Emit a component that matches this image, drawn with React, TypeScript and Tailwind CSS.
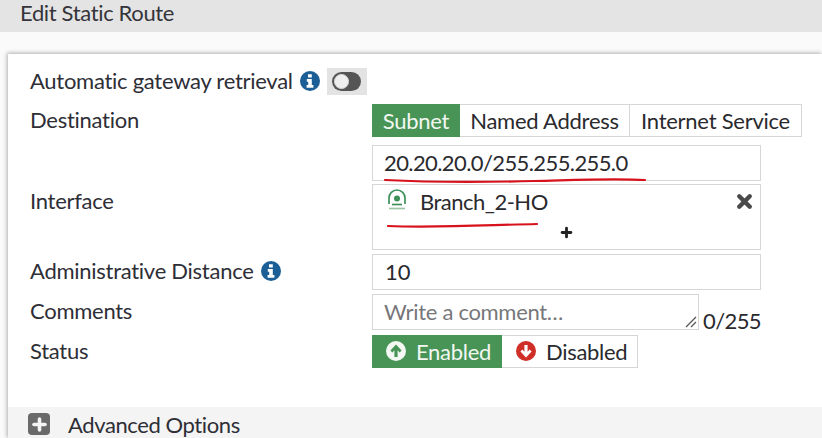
import React from 'react';
import { Plus, X } from 'lucide-react';

const LABEL = 'w-[342px] shrink-0 -translate-y-[1px] text-[22px] leading-[26px] text-[#2e2e36] tracking-[-0.27px]';
const FIELD = 'border border-[#d6d6d6] bg-white text-[22px] text-[#2a2a2e]';

const InfoIcon = () => (
  <svg width="20" height="20" viewBox="0 0 20 20" className="shrink-0">
    <circle cx="10" cy="10" r="10" fill="#1c5f96" />
    <path d="M8 3.2h3.8v3.2H8zM6.8 8h5v6h1.6v2.8H6.6V14h1.6v-3.2H6.8z" fill="#fff" />
  </svg>
);

const Toggle = () => (
  <span className="ml-[7px] flex h-[27px] w-[40px] items-center justify-center bg-[#e3e3e3]">
    <span className="flex h-[19px] w-[29px] items-center rounded-full bg-[#555]">
      <span className="ml-[2px] h-[15px] w-[15px] rounded-full border border-[#ddd] bg-[#eee]" />
    </span>
  </span>
);

const Tab = ({ label, active, className }: { label: string; active?: boolean; className: string }) => (
  <span
    className={`flex h-full items-center justify-center pb-[1px] text-[22px] tracking-[-0.25px] ${className} ${
      active ? 'bg-[#479456] text-[#f2f7f2]' : 'border-y border-r border-[#d6d6d6] text-[#2a2a2e]'
    }`}
  >
    {label}
  </span>
);

const TunnelIcon = () => (
  <svg width="22" height="24" viewBox="0 0 22 24" fill="none" className="shrink-0">
    <path d="M3 16V10a8 8 0 0 1 16 0v6" stroke="#3f9058" strokeWidth="1.7" />
    <circle cx="11" cy="10.5" r="3" fill="#3f9058" />
    <path d="M6 16.5h10" stroke="#3f9058" strokeWidth="1.7" />
    <path d="M3 20.5h16" stroke="#9cc4a5" strokeWidth="1.7" />
  </svg>
);

const UpIcon = () => (
  <svg width="20" height="20" viewBox="0 0 20 20" className="shrink-0">
    <circle cx="10" cy="10" r="10" fill="#f4f8f4" />
    <path d="M10 3.6 15.6 9.6 13.6 11.4 11.6 9.3V16H8.4V9.3L6.4 11.4 4.4 9.6z" fill="#479456" />
  </svg>
);

const DownIcon = () => (
  <svg width="20" height="20" viewBox="0 0 20 20" className="shrink-0">
    <circle cx="10" cy="10" r="10" fill="#cf2f27" />
    <path d="M10 16.4 4.4 10.4 6.4 8.6 8.4 10.7V4h3.2v6.7l2-2.1 2 1.8z" fill="#fff" />
  </svg>
);

// red pen marks drawn over the screenshot
const Scribble = ({ d, className }: { d: string; className: string }) => (
  <svg className={`pointer-events-none absolute ${className}`} width="270" height="10" viewBox="0 0 270 10" fill="none">
    <path d={d} stroke="#d8121c" strokeWidth="2.2" strokeLinecap="round" />
  </svg>
);

export default function App() {
  return (
    <div
      className="flex h-[438px] w-[822px] flex-col overflow-hidden bg-[#fafafa]"
      style={{ fontFamily: 'Lato, "Open Sans", sans-serif' }}
    >
      <div className="flex h-[32px] shrink-0 items-center bg-[#e4e4e4] pb-[8px] pl-[20px] text-[22px] tracking-[-0.35px] text-[#34343a]">
        Edit Static Route
      </div>

      <div className="ml-[8px] mt-[22px] flex flex-1 flex-col bg-white shadow-[-1px_-1px_4px_rgba(0,0,0,0.3)]">
        <div className="mt-[14px] flex h-[27px] items-center pl-[22px]">
          <span className="-translate-y-[1px] text-[22px] tracking-[-0.27px] text-[#2e2e36]">Automatic gateway retrieval</span>
          <span className="ml-[7px] -translate-y-[1px]"><InfoIcon /></span>
          <Toggle />
        </div>

        <div className="mt-[9px] flex h-[33px] items-center pl-[22px]">
          <span className={LABEL}>Destination</span>
          <div className="flex h-full">
            <Tab label="Subnet" active className="w-[88px]" />
            <Tab label="Named Address" className="w-[170px]" />
            <Tab label="Internet Service" className="w-[172px]" />
          </div>
        </div>

        <div className="mt-[8px] flex h-[36px] pl-[364px]">
          <div className={`${FIELD} flex w-[389px] items-center pb-[1px] pl-[11px] tracking-[-0.6px]`}>20.20.20.0/255.255.255.0</div>
        </div>

        <div className="relative mt-[3px] flex h-[66px] pl-[22px]">
          <span className={`${LABEL} pt-[5px]`}>Interface</span>
          <div className={`${FIELD} relative flex w-[389px] items-start pl-[13px] pt-[3px]`}>
            <TunnelIcon />
            <span className="ml-[12px] -translate-y-[1px] leading-[30px] tracking-[-0.5px]">Branch_2-HO</span>
            <X size={21} strokeWidth={5} className="absolute right-[5px] top-[6px] text-[#4a4a4a]" />
            <Plus size={15} strokeWidth={4.5} className="absolute left-[186px] top-[40px] text-[#222]" />
          </div>
        </div>

        <div className="mt-[4px] flex h-[36px] items-center pl-[22px]">
          <span className={`${LABEL} flex items-center`}>
            Administrative Distance
            <span className="ml-[7px]"><InfoIcon /></span>
          </span>
          <div className={`${FIELD} flex h-full w-[389px] items-center pb-[1px] pl-[12px]`}>10</div>
        </div>

        <div className="mt-[4px] flex h-[36px] items-center pl-[22px]">
          <span className={LABEL}>Comments</span>
          <div className={`${FIELD} relative flex h-full w-[327px] items-center pb-[1px] pl-[11px] tracking-[-0.3px] text-[#77777a]`}>
            Write a comment…
            <svg width="12" height="12" viewBox="0 0 12 12" fill="none" className="absolute bottom-[1px] right-[1px]">
              <path d="M1 11 11 1M6 11l5-5" stroke="#555" strokeWidth="1.3" />
            </svg>
          </div>
          <span className="ml-[4px] translate-y-[4px] self-end text-[22px] leading-[26px] tracking-[-0.6px] text-[#2a2a2e]">0/255</span>
        </div>

        <div className="mt-[5px] flex h-[33px] items-center pl-[22px]">
          <span className={LABEL}>Status</span>
          <div className="flex h-full">
            <span className="flex h-full w-[130px] items-center gap-[10px] bg-[#479456] pb-[1px] pl-[14px] text-[22px] tracking-[-0.28px] text-[#f2f7f2]">
              <UpIcon />
              Enabled
            </span>
            <span className="flex h-full w-[136px] items-center gap-[10px] border-y border-r border-[#d6d6d6] pb-[1px] pl-[14px] text-[22px] tracking-[-0.3px] text-[#2a2a2e]">
              <DownIcon />
              Disabled
            </span>
          </div>
        </div>

        <div className="mt-[39px] flex flex-1 items-start bg-[#f4f4f4] pl-[20px] pt-[6px]">
          <span className="flex h-[22px] w-[22px] items-center justify-center rounded-[4px] bg-[#6a6a6a]">
            <Plus size={19} strokeWidth={4.5} className="text-[#f4f4f4]" />
          </span>
          <span className="ml-[18px] -translate-y-[1px] text-[22px] leading-[26px] tracking-[-0.4px] text-[#2e2e36]">Advanced Options</span>
        </div>
      </div>

      <Scribble className="left-[384px] top-[176px]" d="M1 4C60 7 110 6 150 5S230 2 261 4" />
      <Scribble className="left-[387px] top-[221px]" d="M1 5C50 7 100 4 150 3" />
    </div>
  );
}
